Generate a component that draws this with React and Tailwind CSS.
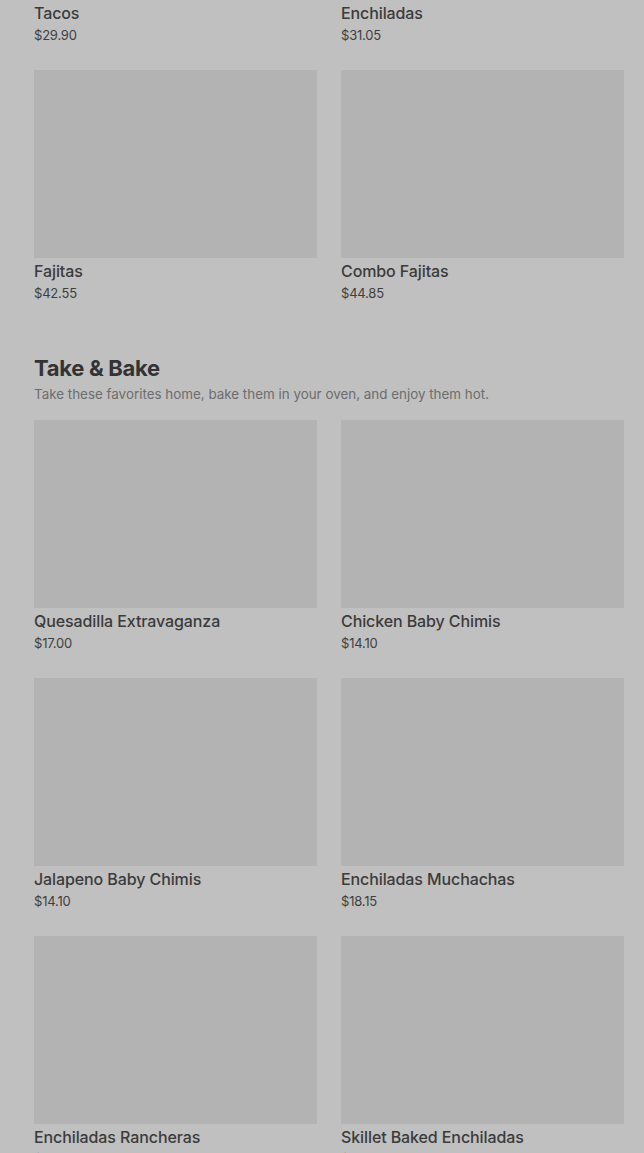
import React from "react";

const sec1 = [
  { name: "Tacos", price: "$29.90" },
  { name: "Enchiladas", price: "$31.05" },
  { name: "Fajitas", price: "$42.55" },
  { name: "Combo Fajitas", price: "$44.85" },
];

const sec2 = [
  { name: "Quesadilla Extravaganza", price: "$17.00" },
  { name: "Chicken Baby Chimis", price: "$14.10" },
  { name: "Jalapeno Baby Chimis", price: "$14.10" },
  { name: "Enchiladas Muchachas", price: "$18.15" },
  { name: "Enchiladas Rancheras", price: "$18.15" },
  { name: "Skillet Baked Enchiladas", price: "$18.15" },
];

function Item({ item }) {
  return (
    <div className="flex flex-col">
      <div className="h-[188px] bg-[#b3b3b3]" />
      <div className="mt-[2px] text-[16px] leading-[22px] font-medium tracking-[-0.1px] text-[#3b3b3b]">
        {item.name}
      </div>
      <div className="mt-[2px] text-[13px] leading-[19px] tracking-[-0.2px] text-[#3f3f3f]">
        {item.price}
      </div>
    </div>
  );
}

function Grid({ items }) {
  return (
    <div className="grid grid-cols-2 gap-x-[24px] gap-y-[25px]">
      {items.map((it) => (
        <Item key={it.name} item={it} />
      ))}
    </div>
  );
}

export default function App() {
  return (
    <div
      className="w-[644px] h-[1153px] overflow-hidden bg-[#c0c0c0]"
      style={{ fontFamily: "Inter, 'Noto Sans', sans-serif" }}
    >
      <div className="-mt-[188px] pl-[34px] pr-[20px]">
        <Grid items={sec1} />
        <div className="mt-[51px]">
          <h2 className="text-[22px] leading-[28px] font-bold tracking-[-0.3px] text-[#333333]">
            Take &amp; Bake
          </h2>
          <p className="mt-[2px] text-[13.4px] leading-[20px] text-[#6d6d6d]">
            Take these favorites home, bake them in your oven, and enjoy them hot.
          </p>
        </div>
        <div className="mt-[16px]">
          <Grid items={sec2} />
        </div>
      </div>
    </div>
  );
}
